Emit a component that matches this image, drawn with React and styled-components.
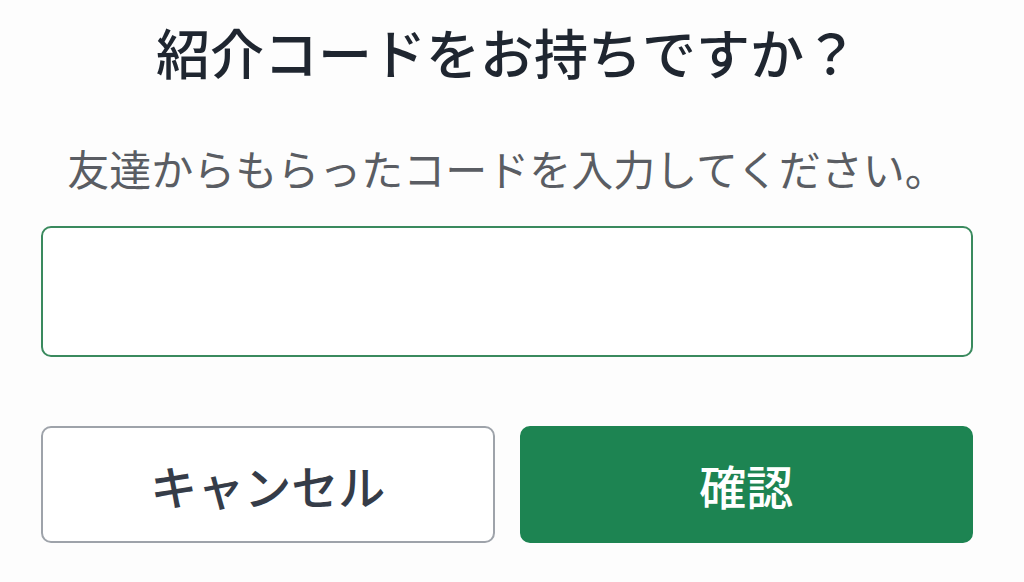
import React from "react";
import styled, { createGlobalStyle } from "styled-components";

const Global = createGlobalStyle`
  html, body { margin: 0; padding: 0; background: #fdfdfd; }
  body { font-family: "Noto Sans CJK JP", "Noto Sans", sans-serif; }
  * { box-sizing: border-box; }
`;

const Dialog = styled.div`
  width: 1024px;
  height: 582px;
  padding: 0 51px 0 41px;
  display: flex;
  flex-direction: column;
  background: #fdfdfd;
`;

const Title = styled.h1`
  margin: 17px 0 0;
  font-size: 54px;
  line-height: 70px;
  font-weight: 500;
  color: #1f2630;
  text-align: center;
`;

const Subtitle = styled.p`
  margin: 53px 0 0;
  font-size: 42px;
  line-height: 56px;
  font-weight: 400;
  color: #5a5d63;
  text-align: center;
`;

const CodeInput = styled.input`
  margin-top: 30px;
  height: 131px;
  width: 100%;
  border: 2px solid #3a8a5e;
  border-radius: 10px;
  background: #fff;
  outline: none;
  font-size: 40px;
  padding: 0 24px;
  font-family: inherit;
`;

const Actions = styled.div`
  margin-top: 69px;
  display: grid;
  grid-template-columns: 1fr 1fr;
  gap: 25px;
`;

const Button = styled.button`
  height: 117px;
  border-radius: 10px;
  font-family: inherit;
  font-size: 47px;
  font-weight: 500;
  cursor: pointer;
  border: 2px solid ${(p) => (p.$primary ? "#1d8452" : "#9ea3aa")};
  background: ${(p) => (p.$primary ? "#1d8452" : "#ffffff")};
  color: ${(p) => (p.$primary ? "#ffffff" : "#353c48")};
`;

export default function App() {
  return (
    <>
      <Global />
      <Dialog>
        <Title>紹介コードをお持ちですか？</Title>
        <Subtitle>友達からもらったコードを入力してください。</Subtitle>
        <CodeInput type="text" />
        <Actions>
          <Button>キャンセル</Button>
          <Button $primary>確認</Button>
        </Actions>
      </Dialog>
    </>
  );
}
